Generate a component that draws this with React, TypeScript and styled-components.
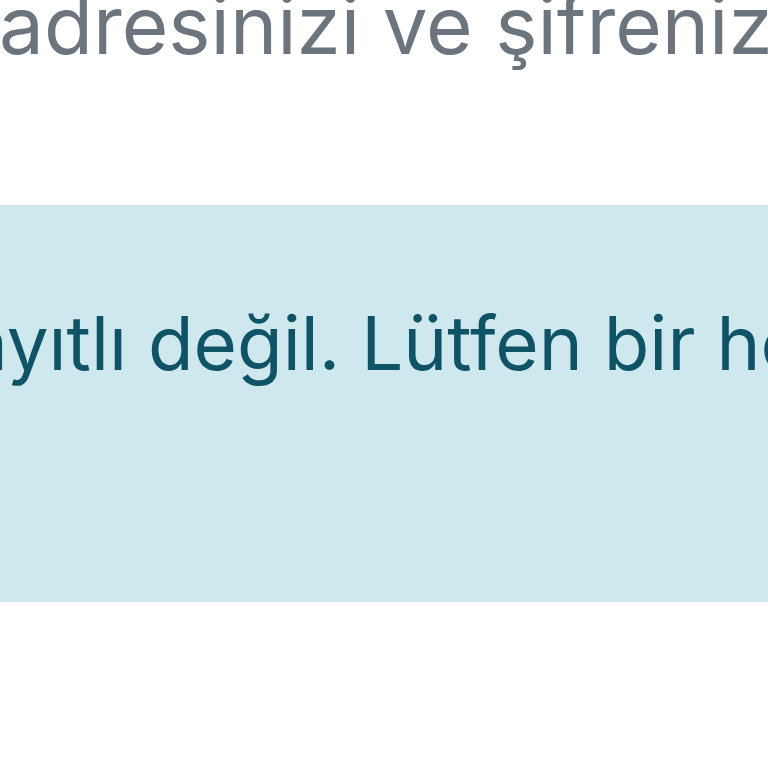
import React from "react";
import styled, { createGlobalStyle } from "styled-components";

const Global = createGlobalStyle`
  html, body { margin: 0; padding: 0; background: #ffffff; overflow: hidden; }
  body { font-family: Inter, "Noto Sans", "DejaVu Sans", sans-serif; }
`;

const Page = styled.main`
  width: 768px;
  height: 768px;
  overflow: hidden;
  white-space: nowrap;
  display: flex;
  flex-direction: column;
`;

const Lead = styled.p`
  margin: -23px 0 0 0;
  font-size: 80px;
  line-height: 96px;
  color: #6c757d;
  font-weight: 400;
  text-indent: -1px;
`;

const Alert = styled.div`
  margin-top: 132px;
  margin-left: -20px;
  margin-right: -20px;
  padding: 81px 0 202px 0;
  background: #cfe8ee;
  color: #0f5466;
  font-size: 74.5px;
  line-height: 114px;
`;

const AlertText = styled.p`
  margin: 0;
  text-indent: -75px;
  padding-left: 20px;
`;

export default function App() {
  return (
    <>
      <Global />
      <Page>
        <Lead>adresinizi ve şifrenizi girin</Lead>
        <Alert>
          <AlertText>kayıtlı değil. Lütfen bir hesap oluşturun.</AlertText>
        </Alert>
      </Page>
    </>
  );
}
